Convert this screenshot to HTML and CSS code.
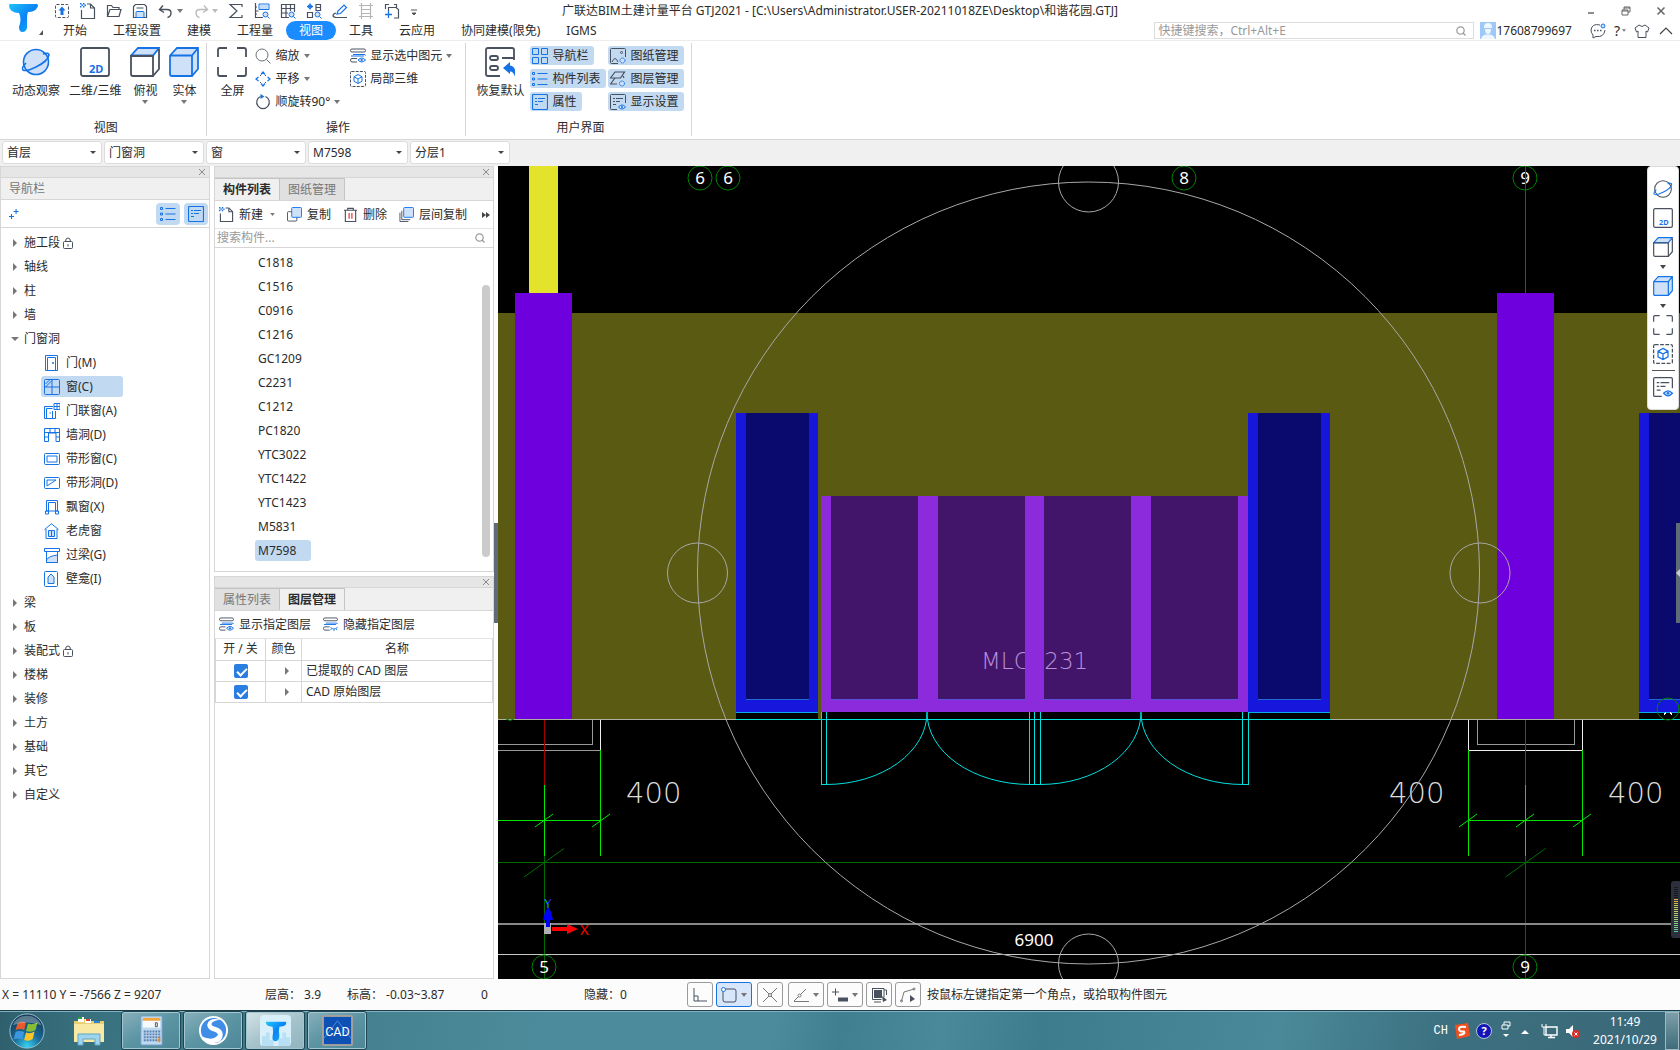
FILE: index.html
```
<!DOCTYPE html>
<html lang="zh-CN">

<head>
    <meta charset="utf-8" />
    <meta name="viewport" content="width=device-width, initial-scale=1">
    <title>广联达BIM土建计量平台 GTJ2021</title>
    <link rel="stylesheet" href="styles.css">
</head>

<body>
    <svg class="sprite" aria-hidden="true">
        <defs>
            <linearGradient id="logo-fill" x1="0" y1="0" x2="1" y2="1">
                <stop offset="0" stop-color="#1fc4fb" />
                <stop offset=".5" stop-color="#0a84f5" />
                <stop offset="1" stop-color="#12b4f8" />
            </linearGradient>
            <radialGradient id="orb-fill" cx=".5" cy=".95" r=".9">
                <stop offset="0" stop-color="#35d3f5" />
                <stop offset=".45" stop-color="#1b6a96" />
                <stop offset="1" stop-color="#123a58" />
            </radialGradient>
        </defs>

        <symbol id="i-caret" viewBox="0 0 6 4"><path d="M0 0h6L3 4z" fill="currentColor" /></symbol>
        <symbol id="i-tri" viewBox="0 0 4 8"><path d="M0 0l4 4-4 4z" fill="#777" /></symbol>
        <symbol id="i-close" viewBox="0 0 8 8"><path d="M1 1l6 6M7 1L1 7" stroke="#8a8a8a" /></symbol>

        <!-- quick access -->
        <symbol id="i-publish" viewBox="0 0 16 16" fill="none"><rect x="1.5" y="1.5" width="13" height="13" rx="1" stroke="#49505e" stroke-dasharray="3 1.5" /><path d="M8 3.500l3.500 4h-2V12h-3V7.500h-2z" fill="#1673e6" /></symbol>
        <symbol id="i-new" viewBox="0 0 16 16" fill="none"><path d="M1.500 7v8.500h13V5l-4-4H7M10.500 1v4h4" stroke="#49505e" stroke-width="1.2" /><path d="M0 0h1.500v1.500H0zM3 0h1.500v1.500H3zM1.500 1.500H3V3H1.500zM0 3h1.500v1.500H0zM3 3h1.500v1.500H3zM4.500 1.500H6V3H4.500z" fill="#1673e6" /></symbol>
        <symbol id="i-open" viewBox="0 0 16 16" fill="none"><path d="M1.500 13.500v-11h4l1.500 2h6v2M1.500 13.500l2.500-7h11l-2 7z" stroke="#49505e" stroke-width="1.2" /></symbol>
        <symbol id="i-save" viewBox="0 0 16 16" fill="none"><path d="M1.500 14.500V3.500l2-2h9l2 2v11z" stroke="#49505e" stroke-width="1.2" /><path d="M4.500 5h7" stroke="#49505e" /><path d="M4 14.500V9.500q0-1 1-1h6q1 0 1 1v5z" fill="#cfe1f8" stroke="#1673e6" /></symbol>
        <symbol id="i-undo" viewBox="0 0 16 16" fill="none"><path d="M5 2.500L1.500 6.500 6 9.500M2 6.500h7q4 0 4 3.500t-3.500 4.500" stroke="currentColor" stroke-width="1.4" /></symbol>
        <symbol id="i-redo" viewBox="0 0 16 16" fill="none"><path d="M11 2.500l3.500 4-4.500 3M14 6.500H7Q3 6.500 3 10t3.500 4.500" stroke="currentColor" stroke-width="1.4" /></symbol>
        <symbol id="i-sigma" viewBox="0 0 16 16" fill="none"><path d="M14 4V1.500H2L9 8l-7 6.500h12V12" stroke="#49505e" stroke-width="1.2" /></symbol>
        <symbol id="i-calc" viewBox="0 0 16 16" fill="none"><path d="M1.500 0v14.500H9M1.500 4H3M1.500 8h3M1.500 11H3" stroke="#49505e" stroke-width="1.2" /><path d="M5 1h10v5.500H5z" stroke="#1673e6" /><path d="M6.500 3h7M6.500 5h7" stroke="#1673e6" stroke-dasharray="1 1" /><circle cx="11.5" cy="11.5" r="2.5" fill="#cfe1f8" stroke="#1673e6" /><path d="M13.500 13.500l2 2" stroke="#1673e6" /></symbol>
        <symbol id="i-table" viewBox="0 0 16 16" fill="none"><path d="M9 14.500H1.500v-13h13V9M1.500 5.500h13M1.500 10H8M6 1.500v13M10.500 1.500V8" stroke="#49505e" stroke-width="1.2" /><circle cx="11.5" cy="11.5" r="2.5" fill="#cfe1f8" stroke="#1673e6" /><path d="M13.500 13.500l2 2" stroke="#1673e6" /></symbol>
        <symbol id="i-parts" viewBox="0 0 16 16" fill="none"><path d="M1.500 9.500h5v5h-5zM10 7.500V1.500h4.500v6zM10 4.500h4.500" stroke="#49505e" stroke-width="1.2" /><path d="M1 3.500h6M4 .5v6" stroke="#1673e6" stroke-width="1.4" /><circle cx="4" cy="3.5" r="1.8" stroke="#1673e6" /><circle cx="11.5" cy="11.5" r="2.5" fill="#cfe1f8" stroke="#1673e6" /><path d="M13.500 13.500l2 2" stroke="#1673e6" /></symbol>
        <symbol id="i-pen" viewBox="0 0 16 16" fill="none"><path d="M5 11l1-3 6-6 2.500 2.500-6 6z" stroke="#1673e6" stroke-width="1.2" /><path d="M4 10q-3 1-3 2.500T4 14.500h11" stroke="#49505e" stroke-width="1.2" /></symbol>
        <symbol id="i-ladder" viewBox="0 0 16 16" fill="none"><path d="M3.500 0v16M12.500 0v16M1 2.500h14M3.500 6.500h9M3.500 10.500h9M1 13.500h14" stroke="#b5b5b5" stroke-width="1.2" /></symbol>
        <symbol id="i-addpage" viewBox="0 0 16 16" fill="none"><path d="M1.500 6V1.500H5M4.500 8V4.500H12l2.500 2V15H10M10 1.500h2.500v3" stroke="#49505e" stroke-width="1.2" /><path d="M1 11.500h7M4.500 8v7" stroke="#1673e6" stroke-width="1.3" /></symbol>

        <!-- large view icons -->
        <symbol id="b-orbit" viewBox="0 0 30 30" fill="none"><circle cx="15" cy="15" r="12.5" fill="var(--orbit-fill)" stroke="var(--orbit-stroke)" stroke-width="1.6" /><path d="M5 16q-5 5-3 7 3 2 13-3 12-6 13-12 0-3-6-1" stroke="#1673e6" stroke-width="1.6" /></symbol>
        <symbol id="b-2d" viewBox="0 0 30 30" fill="none"><rect x="1" y="1" width="28" height="28" rx="2" stroke="#49505e" stroke-width="1.8" /><text x="9" y="26" class="two-d">2D</text></symbol>
        <symbol id="b-top" viewBox="0 0 30 30" fill="none"><path d="M1 8.500L8 1h21l-6 7.500z" fill="#cfe1f8" stroke="#1673e6" stroke-width="1.8" /><path d="M1 9v18q0 2 2 2h20V9zM23 29l6-7V2" stroke="#49505e" stroke-width="1.8" /></symbol>
        <symbol id="b-solid" viewBox="0 0 30 30"><path d="M1 8.500L8 1h21v21l-6 7H3q-2 0-2-2zM1 8.500h22V29M23 8.500L29 1" fill="#cfe1f8" stroke="#1673e6" stroke-width="1.8" /></symbol>
        <symbol id="b-full" viewBox="0 0 30 30" fill="none"><path d="M1 10V3q0-2 2-2h7M20 1h7q2 0 2 2v7M29 20v7q0 2-2 2h-7M10 29H3q-2 0-2-2v-7" stroke="#49505e" stroke-width="1.8" /></symbol>
        <symbol id="b-reset" viewBox="0 0 30 30" fill="none"><path d="M15 29H3q-2 0-2-2V3q0-2 2-2h24q2 0 2 2v10M17 11h12" stroke="#49505e" stroke-width="1.8" /><rect x="5" y="9" width="8" height="4" rx="2" stroke="#49505e" stroke-width="1.8" /><rect x="5" y="19" width="8" height="4" rx="2" stroke="#49505e" stroke-width="1.8" /><path d="M18 21l7-6v3.500q7 1 4.500 11-1-5-4.500-5V27z" fill="#1673e6" /></symbol>

        <!-- small ribbon icons -->
        <symbol id="i-zoom" viewBox="0 0 16 16" fill="none"><circle cx="7" cy="7" r="6" stroke="#6b7079" /><path d="M11.500 11.500l4 4" stroke="#6b7079" /></symbol>
        <symbol id="i-pan" viewBox="0 0 16 16" fill="none"><path d="M6 3.500l2-2.500 2 2.500M6 12.500L8 15l2-2.500M3.500 6L1 8l2.500 2M12.500 6L15 8l-2.500 2" stroke="#1673e6" stroke-width="1.3" /><path d="M5 5l1-1M11 5l-1-1M5 11l1 1M11 11l-1 1" stroke="#49505e" /></symbol>
        <symbol id="i-rotate" viewBox="0 0 16 16" fill="none"><path d="M10.500 2.500a6.300 6.300 0 1 1-5 0" stroke="#49505e" stroke-width="1.2" /><path d="M5.500 0l4 2.500-4 2.500z" fill="#1673e6" /></symbol>
        <symbol id="i-rows" viewBox="0 0 16 16" fill="none"><rect x=".5" y="1" width="15" height="3" rx="1.5" stroke="#49505e" /><path d="M2 10.500h5M2 14h5M2 10.500q-1.500 0-1.500 1.700T2 14" stroke="#49505e" /><path d="M3 6.500h11q1.500 0 1.500 1M1 8h13" stroke="#1673e6" /><path d="M8 12q3.700-4 7.500 0-3.800 4-7.500 0z" fill="#cfe1f8" stroke="#1673e6" /><circle cx="11.7" cy="12" r="1" fill="#1673e6" /></symbol>
        <symbol id="i-rows-hide" viewBox="0 0 16 16" fill="none"><rect x=".5" y="1" width="15" height="3" rx="1.5" stroke="#49505e" /><path d="M2 10.500h5M2 14h5M2 10.500q-1.500 0-1.500 1.700T2 14" stroke="#49505e" /><path d="M3 6.500h11q1.500 0 1.500 1M1 8h13" stroke="#1673e6" /><path d="M8 11q3.500 3.500 7.500 0M9 12.500l-1 1.500M11.700 13v2M14 12.500l1 1.500" stroke="#1673e6" /></symbol>
        <symbol id="i-local" viewBox="0 0 16 16" fill="none"><rect x=".5" y=".5" width="15" height="15" rx="1" stroke="#49505e" stroke-dasharray="3 1.2" /><path d="M8 3.500l4 2.200v4.600l-4 2.200-4-2.200V5.700zM4 5.700L8 8l4-2.300M8 8v4.500" stroke="#1673e6" /></symbol>
        <symbol id="i-four" viewBox="0 0 16 16" fill="none"><path d="M.5.5h6v6h-6zM9.500.5h6v6h-6zM.5 9.500h6v6h-6zM9.500 9.500h6v6h-6z" stroke="#1673e6" /></symbol>
        <symbol id="i-list" viewBox="0 0 16 16" fill="none"><path d="M5.500 2.500h10M5.500 8h10M5.500 13.500h10" stroke="#1673e6" stroke-width="1.2" /><path d="M.5 1.500h2v2h-2zM.5 7h2v2h-2zM.5 12.500h2v2h-2z" stroke="#1673e6" /></symbol>
        <symbol id="i-prop" viewBox="0 0 16 16" fill="none"><rect x=".5" y=".5" width="15" height="15" rx="1" stroke="#1673e6" stroke-width="1.2" /><path d="M3 4.500h2M6 4.500h7M3 7.500h2M6 7.500h5M3 10.500h3" stroke="#1673e6" /></symbol>
        <symbol id="i-drawing" viewBox="0 0 16 16" fill="none"><path d="M8 15.500H1.500q-1 0-1-1v-13q0-1 1-1h13q1 0 1 1V9" stroke="#49505e" /><circle cx="11.5" cy="4.5" r="1" stroke="#49505e" /><path d="M2 14q3-7 6 0" stroke="#49505e" /><circle cx="12.5" cy="12.5" r="2.5" fill="#cfe1f8" stroke="#1673e6" stroke-dasharray="1.5 .5" /></symbol>
        <symbol id="i-layer" viewBox="0 0 16 16" fill="none"><path d="M5 1h9.500l-4 6H.5zM5 7l-4.500 6H7M13 5l1 2" stroke="#49505e" stroke-width="1.2" /><circle cx="12" cy="12.5" r="2.5" fill="#cfe1f8" stroke="#1673e6" stroke-dasharray="1.5 .5" /></symbol>
        <symbol id="i-display" viewBox="0 0 16 16" fill="none"><path d="M7 15.500H1.500q-1 0-1-1v-13q0-1 1-1h13q1 0 1 1V9" stroke="#49505e" /><path d="M3 4.500h2M6 4.500h7M3 7.500h2M6 7.500h4M3 10.500h3" stroke="#49505e" /><path d="M8.500 13q3.500-4 7 0-3.500 4-7 0z" fill="#cfe1f8" stroke="#1673e6" /><circle cx="12" cy="13" r="1" fill="#1673e6" /></symbol>

        <!-- list toolbar -->
        <symbol id="i-copy" viewBox="0 0 16 16"><rect x=".5" y="5" width="10" height="10" rx="1" fill="none" stroke="#49505e" /><rect x="5" y=".5" width="10.5" height="10.5" rx="1" fill="#cfe1f8" stroke="#1673e6" /></symbol>
        <symbol id="i-trash" viewBox="0 0 16 16" fill="none"><path d="M1 3.500h14M2.500 3.500v12h11v-12M5 3.500v-2h6v2" stroke="#49505e" stroke-width="1.2" /><path d="M6.500 6.500v6M9.500 6.500v6" stroke="#e02a2a" stroke-width="1.2" /></symbol>
        <symbol id="i-copyfloor" viewBox="0 0 16 16"><path d="M1 6v9.500h9M3 4v9.500h9" fill="none" stroke="#49505e" /><rect x="5" y=".5" width="10.5" height="10.5" rx="1" fill="#cfe1f8" stroke="#1673e6" /></symbol>
        <symbol id="i-search" viewBox="0 0 10 10" fill="none"><circle cx="4.5" cy="4.5" r="3.7" stroke="#9a9a9a" stroke-width="1.2" /><path d="M7 7l2.500 2.500" stroke="#9a9a9a" stroke-width="1.2" /></symbol>
        <symbol id="i-lock" viewBox="0 0 10 12" fill="none"><rect x=".5" y="4.5" width="9" height="7" rx="1" stroke="#49505e" /><path d="M2.500 4.500Q2.500 1 5 1t2.500 3.500M5 7v2.500" stroke="#49505e" /></symbol>

        <!-- door and window components -->
        <symbol id="c-door" viewBox="0 0 16 16" fill="none"><path d="M1.500.5h12v15h-12zM3.500 15.500v-13h8v13" stroke="#1673e6" /><path d="M8 8h2" stroke="#1673e6" stroke-width="1.5" /></symbol>
        <symbol id="c-window" viewBox="0 0 16 16" fill="none"><rect x=".5" y=".5" width="15" height="15" rx="1" stroke="#1673e6" /><path d="M8 1v14M1 8h14M1.500 5l4-4M1.500 8L8 1.500" stroke="#1673e6" /></symbol>
        <symbol id="c-doorwin" viewBox="0 0 16 16" fill="none"><path d="M9 3.500H.5v12h11V8M2.500 15.500v-10h6M8.500 8v7" stroke="#1673e6" /><path d="M10 .5h6v6h-6zM10 3.500h6M13 .5v6M5.500 10h1.500" stroke="#1673e6" /></symbol>
        <symbol id="c-hole" viewBox="0 0 16 16" fill="none"><path d="M.5 1.500h15v13h-3.500V6H4.500v8.500h-4zM.5 5.500h15M6 1.500v4M11 1.500v4M.5 10h4M12 10h3.500" stroke="#1673e6" /></symbol>
        <symbol id="c-strip" viewBox="0 0 16 16" fill="none"><rect x=".5" y="2.5" width="15" height="11" rx="1" stroke="#1673e6" /><path d="M3 5h10v6H3z" stroke="#1673e6" /></symbol>
        <symbol id="c-striphole" viewBox="0 0 16 16" fill="none"><rect x=".5" y="2.5" width="15" height="11" rx="1" stroke="#1673e6" /><path d="M3 11V5h9z" stroke="#1673e6" /></symbol>
        <symbol id="c-bay" viewBox="0 0 16 16" fill="none"><path d="M2.500 12V1.500h11V12M4.500 12V3.500h7V12M2 12h12M1.500 12h3v3h-3zM11.500 12h3v3h-3z" stroke="#1673e6" /></symbol>
        <symbol id="c-dormer" viewBox="0 0 16 16"><path d="M.5 6.500L7.500.8l7 5.700M2 6v9.500h11V6" fill="none" stroke="#1673e6" /><path d="M4.500 7.500h6v6h-6zM7.500 7.500v6" fill="#cfe1f8" stroke="#1673e6" /></symbol>
        <symbol id="c-lintel" viewBox="0 0 16 16"><path d="M.5 1.500h15v3H.5zM2.500 4.500v11h11v-11" fill="none" stroke="#1673e6" /><path d="M2.500 13q2-4 11-5v7.500h-11z" fill="#cfe1f8" stroke="#1673e6" /></symbol>
        <symbol id="c-niche" viewBox="0 0 16 16"><rect x=".5" y=".5" width="13" height="15" rx="1" fill="none" stroke="#1673e6" /><path d="M4 12.500V6l3-3 3 3v6.500z" fill="#cfe1f8" stroke="#1673e6" /></symbol>
    </svg>

    <header class="titlebar">
        <button class="logo" aria-label="主菜单">
            <svg width="44" height="34" viewBox="0 0 44 34"><path d="M10 4h27q2 1 0 4-2 4-9 4-1 2-1 8v8q-1 4-4.500 4T19 27q3-8 0-14-9 0-10-7 0-2 1-2z" fill="url(#logo-fill)" /><path d="M43 30v5h-4z" fill="#555" /></svg>
        </button>
        <div class="title-row">
            <div class="quick">
                <button aria-label="发布"><svg><use href="#i-publish" /></svg></button>
                <button aria-label="新建"><svg><use href="#i-new" /></svg></button>
                <button aria-label="打开"><svg><use href="#i-open" /></svg></button>
                <button aria-label="保存"><svg><use href="#i-save" /></svg></button>
                <button aria-label="撤销"><svg><use href="#i-undo" /></svg><svg class="caret"><use href="#i-caret" /></svg></button>
                <button class="off" aria-label="恢复"><svg><use href="#i-redo" /></svg><svg class="caret"><use href="#i-caret" /></svg></button>
                <button aria-label="汇总"><svg><use href="#i-sigma" /></svg></button>
                <button aria-label="查看计算式"><svg><use href="#i-calc" /></svg></button>
                <button aria-label="查看工程量"><svg><use href="#i-table" /></svg></button>
                <button aria-label="查找图元"><svg><use href="#i-parts" /></svg></button>
                <button aria-label="画笔"><svg><use href="#i-pen" /></svg></button>
                <button aria-label="钢筋"><svg><use href="#i-ladder" /></svg></button>
                <button aria-label="添加页"><svg><use href="#i-addpage" /></svg></button>
                <button class="customize" aria-label="自定义"><svg viewBox="0 0 16 16"><path d="M5 7h6M6 10h4l-2 2z" fill="#555" stroke="#555" /></svg></button>
            </div>
            <h1>广联达BIM土建计量平台 GTJ2021 - [C:\Users\Administrator.USER-20211018ZE\Desktop\和谐花园.GTJ]</h1>
            <div class="window-buttons">
                <button aria-label="最小化"><svg viewBox="0 0 10 10"><path d="M2 7h6" stroke="#666" stroke-width="1.5" /></svg></button>
                <button aria-label="还原"><svg viewBox="0 0 10 10" fill="none"><path d="M1 4h6v5H1zM3 4V1h6v5H7M1 5h6M3 2h6" stroke="#666" /></svg></button>
                <button aria-label="关闭"><svg viewBox="0 0 10 10"><path d="M1.500 1.500l7 7M8.500 1.500l-7 7" stroke="#666" stroke-width="1.5" /></svg></button>
            </div>
        </div>
        <div class="tab-row">
            <nav class="tabs">
                <a href="#">开始</a>
                <a href="#">工程设置</a>
                <a href="#">建模</a>
                <a href="#">工程量</a>
                <a href="#" class="active">视图</a>
                <a href="#">工具</a>
                <a href="#">云应用</a>
                <a href="#">协同建模(限免)</a>
                <a href="#">IGMS</a>
            </nav>
            <label class="hotkey">
                <input type="search" aria-label="快捷键搜索" placeholder="快捷键搜索，Ctrl+Alt+E">
                <svg><use href="#i-search" /></svg>
            </label>
            <a href="#" class="account">
                <svg width="16" height="17" viewBox="0 0 16 17"><path d="M0 0h16v17H0z" fill="#9ec9f7" /><path d="M4 5q0-4 4-4t4 4v1H4zM5 7h6q0 5-3 5T5 7zM1 17q1-4 5-4.500h4q4 .5 5 4.500z" fill="#eef6ff" /></svg>17608799697
            </a>
            <div class="help-buttons">
                <button aria-label="消息"><svg viewBox="0 0 16 16" fill="none"><path d="M10 2Q2 0 1 7q0 3 2 5v3l3-1.500q8 1 9-6.500" stroke="#49505e" /><path d="M4 7.500h1.500M7 7.500h1.500M10 7.500h1.500" stroke="#49505e" stroke-width="1.5" /><circle cx="13" cy="3" r="2" fill="#cfe1f8" stroke="#1673e6" /></svg></button>
                <button class="help" aria-label="帮助">?<svg class="caret"><use href="#i-caret" /></svg></button>
                <button aria-label="皮肤"><svg viewBox="0 0 16 16" fill="none"><path d="M5 2L1 5l1.500 4L4 8v6.500h8V8l1.500 1L15 5l-4-3q-3 3-6 0z" stroke="#49505e" /></svg></button>
                <button aria-label="收起"><svg viewBox="0 0 16 16" fill="none"><path d="M2 11l6-6 6 6" stroke="#444" stroke-width="1.2" /></svg></button>
            </div>
        </div>
    </header>

    <section class="ribbon">
        <div class="group wide">
            <div class="group-body">
                <button class="big"><svg><use href="#b-orbit" /></svg>动态观察</button>
                <button class="big"><svg><use href="#b-2d" /></svg>二维/三维</button>
                <button class="big"><svg><use href="#b-top" /></svg>俯视<svg class="caret"><use href="#i-caret" /></svg></button>
                <button class="big"><svg><use href="#b-solid" /></svg>实体<svg class="caret"><use href="#i-caret" /></svg></button>
            </div>
            <h2>视图</h2>
        </div>
        <div class="group">
            <div class="group-body">
                <button class="big"><svg><use href="#b-full" /></svg>全屏</button>
                <div class="stack">
                    <button class="small"><svg><use href="#i-zoom" /></svg>缩放<svg class="caret"><use href="#i-caret" /></svg></button>
                    <button class="small"><svg><use href="#i-pan" /></svg>平移<svg class="caret"><use href="#i-caret" /></svg></button>
                    <button class="small"><svg><use href="#i-rotate" /></svg>顺旋转90°<svg class="caret"><use href="#i-caret" /></svg></button>
                </div>
                <div class="stack">
                    <button class="small"><svg><use href="#i-rows" /></svg>显示选中图元<svg class="caret"><use href="#i-caret" /></svg></button>
                    <button class="small"><svg><use href="#i-local" /></svg>局部三维</button>
                </div>
            </div>
            <h2>操作</h2>
        </div>
        <div class="group">
            <div class="group-body">
                <button class="big"><svg><use href="#b-reset" /></svg>恢复默认</button>
                <div class="stack">
                    <button class="small on"><svg><use href="#i-four" /></svg>导航栏</button>
                    <button class="small on"><svg><use href="#i-list" /></svg>构件列表</button>
                    <button class="small on"><svg><use href="#i-prop" /></svg>属性</button>
                </div>
                <div class="stack">
                    <button class="small on"><svg><use href="#i-drawing" /></svg>图纸管理</button>
                    <button class="small on"><svg><use href="#i-layer" /></svg>图层管理</button>
                    <button class="small on"><svg><use href="#i-display" /></svg>显示设置</button>
                </div>
            </div>
            <h2>用户界面</h2>
        </div>
    </section>

    <section class="selectors">
        <div class="select"><select aria-label="楼层"><option>首层</option></select></div>
        <div class="select"><select aria-label="构件分类"><option>门窗洞</option></select></div>
        <div class="select"><select aria-label="构件类型"><option>窗</option></select></div>
        <div class="select"><select aria-label="构件"><option>M7598</option></select></div>
        <div class="select"><select aria-label="分层"><option>分层1</option></select></div>
    </section>

    <main>
        <aside class="panel navigator">
            <div class="grip"><button aria-label="关闭"><svg><use href="#i-close" /></svg></button></div>
            <h2>导航栏</h2>
            <div class="nav-tools">
                <button class="plus" aria-label="展开"><svg viewBox="0 0 12 12"><path d="M8.500 0v6M5.500 3h6M3 6v6M0 9h6" stroke="#1673e6" stroke-width="1.3" /></svg></button>
                <button class="on" aria-label="列表"><svg><use href="#i-list" /></svg></button>
                <button class="on" aria-label="图标"><svg><use href="#i-prop" /></svg></button>
            </div>
            <ul class="tree">
                <li><button><svg class="tri"><use href="#i-tri" /></svg>施工段<svg class="lock"><use href="#i-lock" /></svg></button></li>
                <li><button><svg class="tri"><use href="#i-tri" /></svg>轴线</button></li>
                <li><button><svg class="tri"><use href="#i-tri" /></svg>柱</button></li>
                <li><button><svg class="tri"><use href="#i-tri" /></svg>墙</button></li>
                <li>
                    <button class="open"><svg class="tri"><use href="#i-tri" /></svg>门窗洞</button>
                    <ul>
                        <li><button><svg><use href="#c-door" /></svg>门(M)</button></li>
                        <li><button class="selected"><svg><use href="#c-window" /></svg>窗(C)</button></li>
                        <li><button><svg><use href="#c-doorwin" /></svg>门联窗(A)</button></li>
                        <li><button><svg><use href="#c-hole" /></svg>墙洞(D)</button></li>
                        <li><button><svg><use href="#c-strip" /></svg>带形窗(C)</button></li>
                        <li><button><svg><use href="#c-striphole" /></svg>带形洞(D)</button></li>
                        <li><button><svg><use href="#c-bay" /></svg>飘窗(X)</button></li>
                        <li><button><svg><use href="#c-dormer" /></svg>老虎窗</button></li>
                        <li><button><svg><use href="#c-lintel" /></svg>过梁(G)</button></li>
                        <li><button><svg><use href="#c-niche" /></svg>壁龛(I)</button></li>
                    </ul>
                </li>
                <li><button><svg class="tri"><use href="#i-tri" /></svg>梁</button></li>
                <li><button><svg class="tri"><use href="#i-tri" /></svg>板</button></li>
                <li><button><svg class="tri"><use href="#i-tri" /></svg>装配式<svg class="lock"><use href="#i-lock" /></svg></button></li>
                <li><button><svg class="tri"><use href="#i-tri" /></svg>楼梯</button></li>
                <li><button><svg class="tri"><use href="#i-tri" /></svg>装修</button></li>
                <li><button><svg class="tri"><use href="#i-tri" /></svg>土方</button></li>
                <li><button><svg class="tri"><use href="#i-tri" /></svg>基础</button></li>
                <li><button><svg class="tri"><use href="#i-tri" /></svg>其它</button></li>
                <li><button><svg class="tri"><use href="#i-tri" /></svg>自定义</button></li>
            </ul>
        </aside>

        <div class="side">
            <section class="panel">
                <div class="grip"><button aria-label="关闭"><svg><use href="#i-close" /></svg></button></div>
                <div class="panel-tabs">
                    <button class="active">构件列表</button>
                    <button>图纸管理</button>
                </div>
                <div class="panel-tools">
                    <button><svg><use href="#i-new" /></svg>新建<svg class="caret"><use href="#i-caret" /></svg></button>
                    <button><svg><use href="#i-copy" /></svg>复制</button>
                    <button><svg><use href="#i-trash" /></svg>删除</button>
                    <button><svg><use href="#i-copyfloor" /></svg>层间复制</button>
                    <button class="more" aria-label="更多"><svg viewBox="0 0 8 6"><path d="M0 0l4 3-4 3zM4 0l4 3-4 3z" fill="#444" /></svg></button>
                </div>
                <label class="filter">
                    <input type="search" aria-label="搜索构件" placeholder="搜索构件...">
                    <svg><use href="#i-search" /></svg>
                </label>
                <div class="list-wrap">
                    <ul class="list">
                        <li><button>C1818</button></li>
                        <li><button>C1516</button></li>
                        <li><button>C0916</button></li>
                        <li><button>C1216</button></li>
                        <li><button>GC1209</button></li>
                        <li><button>C2231</button></li>
                        <li><button>C1212</button></li>
                        <li><button>PC1820</button></li>
                        <li><button>YTC3022</button></li>
                        <li><button>YTC1422</button></li>
                        <li><button>YTC1423</button></li>
                        <li><button>M5831</button></li>
                        <li><button class="selected">M7598</button></li>
                    </ul>
                    <div class="thumb"></div>
                </div>
            </section>

            <section class="panel layers">
                <div class="grip"><button aria-label="关闭"><svg><use href="#i-close" /></svg></button></div>
                <div class="panel-tabs">
                    <button>属性列表</button>
                    <button class="active">图层管理</button>
                </div>
                <div class="panel-tools">
                    <button><svg><use href="#i-rows" /></svg>显示指定图层</button>
                    <button><svg><use href="#i-rows-hide" /></svg>隐藏指定图层</button>
                </div>
                <table>
                    <thead>
                        <tr><th class="col-on">开 / 关</th><th class="col-color">颜色</th><th>名称</th></tr>
                    </thead>
                    <tbody>
                        <tr>
                            <td><input type="checkbox" id="layer-1" checked></td>
                            <td class="expand"><svg class="tri"><use href="#i-tri" /></svg></td>
                            <td class="name"><label for="layer-1">已提取的 CAD 图层</label></td>
                        </tr>
                        <tr>
                            <td><input type="checkbox" id="layer-2" checked></td>
                            <td class="expand"><svg class="tri"><use href="#i-tri" /></svg></td>
                            <td class="name"><label for="layer-2">CAD 原始图层</label></td>
                        </tr>
                    </tbody>
                </table>
            </section>
        </div>

        <button class="splitter" aria-label="收起面板"><span></span></button>

        <div class="viewport">
            <!-- drawing units are window pixels -->
            <svg class="model" viewBox="498 166 1182 813" preserveAspectRatio="xMidYMid slice" shape-rendering="crispEdges">
                <rect x="498" y="166" width="1182" height="813" fill="#000" />
                <rect x="498" y="313" width="1182" height="407" fill="#5a5a12" />
                <rect x="529" y="166" width="29" height="127" fill="#e3e32b" />
                <rect x="515" y="293" width="57" height="427" fill="#6f00de" />
                <rect x="1497" y="293" width="57" height="427" fill="#6f00de" />

                <!-- windows either side of the door -->
                <g id="side-window">
                    <rect x="736" y="413" width="82" height="307" fill="#000" />
                    <rect x="736" y="413" width="82" height="299" fill="#1616dd" />
                    <rect x="746" y="413" width="63" height="286" fill="#0a0a6e" />
                    <path d="M736 712.500h82" stroke="#0aa8f0" />
                    <path d="M746 699.500h63" stroke="#1e6ad0" />
                </g>
                <use href="#side-window" x="512" />
                <use href="#side-window" x="903" />

                <!-- door -->
                <rect x="821" y="712" width="427" height="8" fill="#000" />
                <rect x="821" y="496" width="427" height="216" fill="#42146a" />
                <text x="981" y="669" class="cad-label">MLC5231</text>
                <path d="M821 496h10v203h87V496h20v203h87V496h19v203h87V496h20v203h87V496h10v216H821z" fill="#8b2bdc" />
                <path d="M831 699.500h87M938 699.500h87M1044 699.500h87M1151 699.500h87" stroke="#5b50d8" />
                <path d="M498 719.500h238M1331 719.500h308" stroke="#b0b0a0" />
                <g fill="none" stroke="#00dede">
                    <path d="M736 719.500h595M1639 719.500h41M821.500 712v72.500h5V712M1029.500 712v72M1034.500 712v72M1040.500 712v72M1029 784.500h12M1242.500 712v72.500h6V712" />
                    <path shape-rendering="auto" d="M826 784.500A101 72 0 0 0 927 712A103 72 0 0 0 1030 784.500M1040 784.500A101 72 0 0 0 1141 712A102 72 0 0 0 1243 784.500" />
                </g>

                <!-- footings, axes and dimensions -->
                <g fill="none">
                    <path d="M498 744.500h94V720M498 750.500h103M1477.500 720v24.500h97V720" stroke="#999" />
                    <path d="M600.500 720v30M1468.500 720v30.500h114V720" stroke="#eee" />
                    <path d="M498 862.500h1182M544.500 856v123M1525.500 856v123" stroke="#006c00" />
                    <path shape-rendering="auto" d="M524 877l40-28.500M1505.500 877l40-28.500" stroke="#006c00" />
                    <path d="M544.500 785v71M600.500 750v106M498 820.500h103M1468.500 750v106M1525.500 785v71M1582.500 750v106M1468 820.500h115" stroke="#00e800" />
                    <path shape-rendering="auto" d="M535 827l18-13M592 827l18-13M1459 827l18-13M1516 827l18-13M1573 827l18-13" stroke="#00e800" />
                    <path d="M544.500 720v65" stroke="#a00000" />
                    <path d="M1525.500 720v65" stroke="#f00000" />
                    <path d="M498 924h1182" stroke="#888" stroke-width="2" />
                    <path d="M498 954.500h1182" stroke="#c8c8c8" />
                </g>

                <g class="axis-rings" shape-rendering="auto">
                    <circle cx="700" cy="178" r="12" />
                    <circle cx="728" cy="178" r="12" />
                    <circle cx="1184" cy="178" r="12" />
                    <circle cx="1525" cy="178" r="12" />
                    <circle cx="544" cy="967" r="12" />
                    <circle cx="1525" cy="967" r="12" />
                    <circle cx="1668" cy="709" r="11" />
                    <path d="M506 719q4 3 8 0" />
                </g>
                <g class="axis-numbers">
                    <text x="700" y="184">6</text>
                    <text x="728" y="184">6</text>
                    <text x="1184" y="184">8</text>
                    <text x="1525" y="184">9</text>
                    <text x="544" y="973">5</text>
                    <text x="1525" y="973">9</text>
                    <text x="1034" y="946">6900</text>
                </g>
                <path d="M1525.500 166v127" stroke="#f00000" />
                <path d="M1664 715l2-3M1670 712l2 3" stroke="#fff" />
                <g class="cad-dims">
                    <text x="626" y="803">400</text>
                    <text x="1389" y="803">400</text>
                    <text x="1608" y="803">400</text>
                </g>

                <!-- orbit control -->
                <g fill="none" stroke="#a8a8a8" shape-rendering="auto">
                    <circle cx="1088.5" cy="573" r="391" />
                    <circle cx="1088.5" cy="182" r="30" />
                    <circle cx="1088.5" cy="964" r="30" />
                    <circle cx="697.5" cy="573" r="30" />
                    <circle cx="1480" cy="573" r="30" />
                </g>

                <g shape-rendering="auto">
                    <path d="M544 923h7v11h-7z" fill="#b0b0b0" />
                    <path d="M552 927h15v-3l11 5-11 5v-3h-15z" fill="#f00" />
                    <path d="M546 927v-7h-3l2-8 3-5 3 5 2 8h-3v7z" fill="#00f" />
                    <text x="580" y="935" class="axis-x">X</text>
                    <text x="544" y="908" class="axis-y">Y</text>
                    <path d="M545 899l3 5v4" stroke="#0c0" fill="none" />
                </g>
            </svg>

            <div class="view-tools">
                <button class="plain-orbit" aria-label="动态观察"><svg><use href="#b-orbit" /></svg></button>
                <button aria-label="二维"><svg><use href="#b-2d" /></svg></button>
                <button class="drop" aria-label="俯视"><svg><use href="#b-top" /></svg><svg class="caret"><use href="#i-caret" /></svg></button>
                <button class="drop" aria-label="实体"><svg><use href="#b-solid" /></svg><svg class="caret"><use href="#i-caret" /></svg></button>
                <button aria-label="全屏"><svg><use href="#b-full" /></svg></button>
                <button aria-label="局部三维"><svg><use href="#i-local" /></svg></button>
                <hr>
                <button aria-label="显示设置"><svg><use href="#i-display" /></svg></button>
            </div>
            <button class="edge-handle" aria-label="展开面板"><svg viewBox="0 0 4 8"><path d="M4 0L0 4l4 4z" fill="#c8ccd0" /></svg></button>
            <div class="meter"></div>
        </div>
    </main>

    <section class="status">
        <span class="coords">X = 11110 Y = -7566 Z = 9207</span>
        <span class="floor">层高： 3.9</span>
        <span class="level">标高： -0.03~3.87</span>
        <span class="count">0</span>
        <span class="hidden-count">隐藏：0</span>
        <div class="snap">
            <button aria-label="正交"><svg viewBox="0 0 16 16" fill="none"><path d="M2 1v13h13M2 9h4v5" stroke="#49505e" /></svg></button>
            <button class="on" aria-label="捕捉"><svg viewBox="0 0 16 16" fill="none"><rect x="2" y="2" width="13" height="13" rx="2" stroke="#49505e" /><circle cx="2.5" cy="2.5" r="2" fill="#fff" stroke="#1673e6" /></svg><svg class="caret"><use href="#i-caret" /></svg></button>
            <button class="first" aria-label="交点"><svg viewBox="0 0 16 16" fill="none"><path d="M1 1l14 14M15 1L1 15" stroke="#777" /><circle cx="8" cy="8" r="1.5" stroke="#777" fill="#fff" /></svg></button>
            <button class="first" aria-label="角度"><svg viewBox="0 0 16 16" fill="none"><path d="M1 14L13 2M1 14.500h15" stroke="#777" /><circle cx="6.5" cy="8.5" r="1.5" stroke="#777" fill="#fff" /></svg><svg class="caret"><use href="#i-caret" /></svg></button>
            <button aria-label="偏移"><svg viewBox="0 0 16 16" fill="none"><path d="M0 5h7M3.500 1.500v7" stroke="#49505e" /><path d="M6 10.500h10v4H6z" fill="#49505e" /></svg><svg class="caret"><use href="#i-caret" /></svg></button>
            <button aria-label="选择"><svg viewBox="0 0 16 16" fill="none"><path d="M3 3h8v8H3z" fill="#49505e" /><path d="M1 1.500h12v9M1.500 1v11.500h9M13 3h2.500v5M3 15h7" stroke="#49505e" /><path d="M11 9l5 4-4 2z" fill="#49505e" /></svg></button>
            <button aria-label="折线"><svg viewBox="0 0 16 16" fill="none"><path d="M1.500 14L4 5l10-3" stroke="#777" /><circle cx="1.5" cy="14" r="1" stroke="#777" /><circle cx="14" cy="2" r="1" stroke="#777" /><path d="M10 8l5 4-5 3z" fill="#49505e" /></svg></button>
        </div>
        <span>按鼠标左键指定第一个角点，或拾取构件图元</span>
    </section>

    <footer class="taskbar">
        <button class="start" aria-label="开始"><svg viewBox="0 0 40 40"><circle cx="20" cy="20" r="18" fill="url(#orb-fill)" stroke="#9fc3d2" /><path d="M10 12q5-3 9-1l-2 8q-4-2-9 0z" fill="#e8592b" /><path d="M21 12q4 2 10-1l-2 8q-5 3-10 1z" fill="#86bd33" /><path d="M8 21q4-2 9 0l-2 8q-4-2-9 0z" fill="#3b97e0" /><path d="M19 21.500q4 2 9-1l-2 8q-4 3-9 1z" fill="#f8c52c" /><path d="M5 14Q9 4 20 4t15 10q-15-6-30 0z" fill="#fff" opacity=".3" /></svg></button>
        <button class="pin" aria-label="资源管理器"><svg viewBox="0 0 34 34"><path d="M2 7h5l1-2h5l1 2h18v20H2z" fill="#e8cf72" /><path d="M6 3h6v5H6zM13 5h6v4h-6z" fill="#fff" /><path d="M6 3h4v2H6z" fill="#2ba13a" /><path d="M14 5h4v2h-4z" fill="#d8432e" /><path d="M22 7h6v2h-6z" fill="#2b86d8" /><path d="M2 10h30v18H2z" fill="#f8e9a4" /><path d="M6 31V20h22v11h-5v-6H11v6z" fill="#9fd4ee" stroke="#5fa6c8" /></svg></button>
        <button class="task" aria-label="计算器"><svg viewBox="0 0 32 32"><rect x="5" y="1" width="22" height="30" rx="1" fill="#bdd8ef" stroke="#6d9cc4" /><path d="M7 3h18v3H7z" fill="#f2a63a" /><path d="M7 6h18v7H7z" fill="#f6fafc" /><path d="M20 8h2v4h-2z" fill="none" stroke="#555" /><path d="M8 17h17M8 20h17M8 23h17M8 26h17" stroke="#5b7fae" stroke-width="2" stroke-dasharray="2 1" /><path d="M23 23h2v5h-2z" fill="#f08a1c" /></svg></button>
        <button class="task" aria-label="浏览器"><svg viewBox="0 0 32 32"><circle cx="16" cy="16" r="15" fill="#fff" /><circle cx="16" cy="16" r="13" fill="#3f8de6" /><path d="M25 5Q11 2 9.500 10q0 5 7 7 6 2 3 5-5 5-16 0 5 8 13 7 9-1 9-9 0-6-8-8-5-1-3-4 3-3 10-3z" fill="#fff" /></svg></button>
        <button class="task current" aria-label="GTJ2021"><svg viewBox="0 0 32 32"><rect width="32" height="32" rx="4" fill="#d9f0fb" /><path d="M2 32V22h4v-4h4v8h4v6zM19 32V24h4v-6h4v5h4v9z" fill="#b8e0f5" /><path d="M6 7h21q1 5-7 5-1 4 0 9 0 6-4 6t-3-5q1-5 0-10-7 0-7-5z" fill="url(#logo-fill)" /></svg></button>
        <button class="task" aria-label="CAD"><svg viewBox="0 0 32 32"><rect width="32" height="32" rx="2" fill="#a4a09c" /><rect x="2" y="2" width="28" height="28" fill="#0d51b5" /><path d="M2 24L16 6l14 18" fill="none" stroke="#4c8ce0" /><text x="16" y="22" class="cad-icon">CAD</text></svg></button>
        <div class="tray">
            <span class="ime">CH</span>
            <svg viewBox="0 0 16 16"><path d="M1 2l13-2 2 13-13 3z" fill="#f2501f" /><path d="M12 4Q5 3 5 6t5 2.500Q12 11 5 12" fill="none" stroke="#fff" stroke-width="2" /></svg>
            <svg viewBox="0 0 16 16"><circle cx="8" cy="8" r="7.5" fill="#1216b8" stroke="#b8c8d8" /><text x="8" y="12" class="tray-help">?</text></svg>
            <svg viewBox="0 0 16 22" class="tall" fill="none"><path d="M4 5h6v4H4zM6 5V2h6v4h-2" stroke="#fff" /><path d="M5 14h6l-3 3z" fill="#fff" /></svg>
            <svg viewBox="0 0 16 16" class="show-hidden"><path d="M4 11h8L8 7z" fill="#fff" /></svg>
            <svg viewBox="0 0 16 16" class="net" fill="none"><path d="M4 4h11v8H4zM9 12v2M6 14.500h7" stroke="#fff" stroke-width="1.4" /><path d="M0 1v3h4V1M2 4v8h2" stroke="#fff" /></svg>
            <svg viewBox="0 0 16 16"><path d="M1 6h3l4-4v12l-4-4H1z" fill="#fff" /><circle cx="11" cy="11" r="4" fill="#dd2b26" /><path d="M9.500 9.500l3 3M12.500 9.500l-3 3" stroke="#fff" /></svg>
            <time datetime="2021-10-29T11:49">11:49<br>2021/10/29</time>
            <button class="desktop" aria-label="显示桌面"></button>
        </div>
    </footer>
</body>

</html>
```
FILE: styles.css
```
:root {
    --text: #2b2b2b;
    --icon: #49505e;
    --blue: #1673e6;
    --on: #c2d9f2;
    --line: #d6d6d6;
    --grey: #f0f0f0;
    --orbit-fill: #cfe1f8;
    --orbit-stroke: #1673e6;
}

* {
    box-sizing: border-box;
}

body {
    margin: 0;
    height: 100vh;
    display: flex;
    flex-direction: column;
    overflow: hidden;
    background: #fff;
    color: var(--text);
    font: 12px/16px "Noto Sans", "Noto Sans CJK SC", sans-serif;
}

button,
input,
select {
    font: inherit;
    color: inherit;
    margin: 0;
    padding: 0;
    border: 0;
    background: none;
}

button,
a {
    display: flex;
    align-items: center;
    white-space: nowrap;
}

a {
    color: inherit;
    text-decoration: none;
}

svg {
    width: 16px;
    height: 16px;
    flex: none;
    overflow: visible;
}

svg.caret {
    width: 6px;
    height: 4px;
    color: #777;
}

svg.tri {
    width: 4px;
    height: 8px;
}

h1,
h2 {
    margin: 0;
    font-size: 12px;
    font-weight: normal;
}

ul {
    list-style: none;
    margin: 0;
    padding: 0;
}

input::placeholder {
    color: #999;
}

.sprite {
    position: absolute;
    width: 0;
    height: 0;
}

.two-d {
    font: bold 11px "Noto Sans", sans-serif;
    fill: var(--blue);
}

/* title bar */

.titlebar {
    position: relative;
    border-bottom: 1px solid #ececec;
}

.logo {
    position: absolute;
    left: 0;
    top: 0;
}

.logo svg {
    width: 44px;
    height: 34px;
}

.title-row {
    display: grid;
    grid-template-columns: 1fr auto 1fr;
    align-items: center;
    height: 21px;
}

.quick {
    display: flex;
    gap: 10px;
    padding-left: 54px;
    color: var(--icon);
}

.quick button {
    gap: 3px;
}

.quick .off,
.off .caret {
    color: #bbb;
}

.quick .customize {
    margin-left: -4px;
}

.window-buttons {
    display: flex;
    justify-content: flex-end;
    gap: 25px;
    padding-right: 14px;
}

.window-buttons svg {
    width: 10px;
    height: 10px;
}

.tab-row {
    display: flex;
    align-items: center;
    height: 19px;
    padding: 0 6px 0 50px;
}

.tabs {
    display: flex;
    flex: 1;
}

.tabs a {
    height: 19px;
    padding: 0 13px;
}

.tabs .active {
    background: #1a8cff;
    color: #fff;
    border-radius: 10px;
}

.hotkey {
    display: flex;
    align-items: center;
    width: 320px;
    height: 17px;
    border: 1px solid #dcdcdc;
    padding: 0 7px 0 3px;
}

.hotkey input,
.filter input {
    flex: 1;
    min-width: 0;
    outline: none;
}

.hotkey svg,
.filter svg {
    width: 10px;
    height: 10px;
}

.account {
    margin-left: 6px;
}

.account svg {
    height: 17px;
}

.help-buttons {
    display: flex;
    gap: 8px;
    margin-left: 18px;
}

.help-buttons button {
    height: 18px;
}

.help {
    font-size: 14px;
    gap: 2px;
}

.help .caret {
    width: 4px;
    height: 3px;
}

/* ribbon */

.ribbon {
    display: flex;
    height: 98px;
    padding: 2px 0 3px;
}

.group {
    display: flex;
    flex-direction: column;
    justify-content: space-between;
    padding: 3px 7px 0 10px;
    border-right: 1px solid var(--line);
}

.group.wide {
    padding: 3px 7px 0 12px;
}

.group h2 {
    text-align: center;
}

.group-body {
    display: flex;
    gap: 6px;
}

.wide .group-body {
    gap: 9px;
}

.big {
    flex-direction: column;
    align-items: center;
    padding-top: 1px;
}

.big > svg:first-child {
    width: 30px;
    height: 30px;
    margin-bottom: 6px;
}

.big .caret {
    margin-top: 1px;
}

.stack {
    display: flex;
    flex-direction: column;
    align-items: flex-start;
    gap: 4px;
}

.stack + .stack {
    margin-left: -4px;
}

.small {
    height: 19px;
    gap: 4px;
    padding: 0 6px 0 2px;
    border-radius: 3px;
}

.on {
    background: var(--on);
}

/* selectors */

.selectors {
    display: flex;
    gap: 2px;
    height: 27px;
    padding: 1px 2px 0;
    background: var(--grey);
    border-top: 1px solid var(--line);
}

.select {
    position: relative;
    width: 100px;
    height: 23px;
}

.select::after {
    content: "";
    position: absolute;
    right: 6px;
    top: 10px;
    border: 3px solid transparent;
    border-top-color: #444;
    border-bottom: 0;
    pointer-events: none;
}

.select select {
    appearance: none;
    width: 100%;
    height: 100%;
    padding: 0 4px;
    background: #fff;
    border: 1px solid #dcdcdc;
    border-radius: 3px;
}

/* panels */

main {
    flex: 1;
    display: flex;
    min-height: 0;
}

.panel {
    border: 1px solid var(--line);
}

.grip {
    display: flex;
    justify-content: flex-end;
    height: 11px;
    padding-right: 3px;
    background: #e6e6e6;
    border-bottom: 1px solid var(--line);
}

.grip svg {
    width: 8px;
    height: 8px;
}

.navigator {
    width: 210px;
    margin-right: 4px;
}

.navigator h2 {
    height: 22px;
    padding: 3px 8px;
    color: #777;
    background: var(--grey);
    border-bottom: 1px solid var(--line);
}

.nav-tools {
    display: flex;
    align-items: center;
    gap: 4px;
    height: 28px;
    padding: 0 1px 0 8px;
    border-bottom: 1px solid var(--line);
}

.nav-tools .on {
    justify-content: center;
    width: 24px;
    height: 22px;
    border-radius: 4px;
}

.plus {
    margin-right: auto;
}

.plus svg {
    width: 10px;
    height: 10px;
}

.tree {
    padding-top: 4px;
}

.tree li > button,
.list button {
    height: 21px;
    margin-bottom: 3px;
}

.tree li > button {
    padding-left: 12px;
}

.tree .tri {
    margin-right: 7px;
}

.tree .open .tri {
    transform: rotate(90deg);
}

.tree .lock {
    width: 10px;
    height: 12px;
    margin-left: 3px;
}

.tree ul button {
    gap: 6px;
    min-width: 82px;
    margin-left: 40px;
    border-radius: 3px;
}

.tree ul li > button {
    padding-left: 3px;
}

.selected {
    background: var(--on);
}

.side {
    display: flex;
    flex-direction: column;
    gap: 4px;
    width: 280px;
}

.layers {
    flex: 1;
}

.panel-tabs {
    display: flex;
    height: 23px;
    background: var(--grey);
    border-bottom: 1px solid var(--line);
}

.panel-tabs button {
    padding: 0 8px;
    color: #777;
    background: #e0e0e0;
    border-right: 1px solid #c4c4c4;
    border-top: 1px solid #c4c4c4;
}

.panel-tabs .active {
    color: var(--text);
    font-weight: bold;
    background: var(--grey);
}

.panel-tools {
    display: flex;
    align-items: center;
    gap: 12px;
    height: 28px;
    padding: 0 2px 0 4px;
    border-bottom: 1px solid #e4e4e4;
}

.panel-tools button {
    gap: 5px;
}

.panel-tools svg {
    width: 15px;
    height: 15px;
}

.panel-tools .caret {
    width: 5px;
    height: 3px;
    margin-left: 2px;
}

.panel-tools .more {
    justify-content: center;
    width: 10px;
    height: 18px;
    margin-left: auto;
}

.more svg {
    width: 8px;
    height: 6px;
}

.filter {
    display: flex;
    align-items: center;
    height: 19px;
    padding: 0 8px 0 2px;
    border-bottom: 1px solid var(--line);
}

.list-wrap {
    display: flex;
    padding: 4px 3px 7px 0;
}

.list {
    flex: 1;
    padding-left: 40px;
}

.list button {
    padding: 0 15px 0 3px;
    border-radius: 3px;
}

.thumb {
    width: 8px;
    margin: 33px 0 7px;
    border-radius: 4px;
    background: #cbcbcb;
}

table {
    width: 100%;
    border-collapse: collapse;
    table-layout: fixed;
}

th,
td {
    height: 21px;
    padding: 0;
    font-weight: normal;
    text-align: center;
    border: 1px solid var(--line);
}

th {
    border-top: 0;
}

.col-on {
    width: 50px;
}

.col-color {
    width: 36px;
}

td svg,
td input {
    vertical-align: middle;
}

td.expand {
    padding-left: 6px;
}

td.name {
    text-align: left;
    padding-left: 4px;
}

input[type="checkbox"] {
    appearance: none;
    position: relative;
    width: 14px;
    height: 14px;
    border-radius: 2px;
    background: #2a7de1;
}

input[type="checkbox"]:checked::after {
    content: "";
    position: absolute;
    left: 5px;
    top: 2px;
    width: 4px;
    height: 8px;
    border: solid #fff;
    border-width: 0 2px 2px 0;
    transform: rotate(45deg);
}

.splitter {
    width: 4px;
}

.splitter span {
    width: 4px;
    height: 100px;
    background: #5f6b76;
}

/* model view */

.viewport {
    position: relative;
    flex: 1;
    min-width: 0;
    background: #000;
}

.model {
    display: block;
    width: 100%;
    height: 100%;
    overflow: hidden;
}

.axis-rings {
    fill: none;
    stroke: #008200;
}

.axis-numbers {
    font-size: 17px;
    text-anchor: middle;
    fill: #fff;
}

.cad-label {
    font: 200 23px "DejaVu Sans Light", "DejaVu Sans", sans-serif;
    fill: #b890dc;
}

.cad-dims {
    font: 200 29px "DejaVu Sans Light", "DejaVu Sans", sans-serif;
    fill: #ddd;
}

.axis-x {
    font-size: 15px;
    fill: #f00;
}

.axis-y {
    font-size: 13px;
    fill: #22f;
}

.view-tools {
    position: absolute;
    top: 0;
    right: 1px;
    display: flex;
    flex-direction: column;
    align-items: center;
    gap: 9px;
    width: 32px;
    padding: 12px 0;
    background: #fff;
    border: 1px solid #dcdcdc;
    border-radius: 4px;
}

.view-tools button {
    flex-direction: column;
    gap: 8px;
}

.view-tools .drop {
    margin-bottom: -2px;
}

.view-tools svg {
    width: 20px;
    height: 20px;
}

.view-tools .caret {
    width: 6px;
    height: 4px;
    color: #444;
}

.view-tools hr {
    width: 23px;
    margin: -3px 0;
    border: 0;
    border-top: 1px solid #555;
}

.plain-orbit {
    --orbit-fill: none;
    --orbit-stroke: #49505e;
}

.edge-handle {
    position: absolute;
    right: 0;
    top: 357px;
    width: 4px;
    height: 100px;
    background: #5f6b76;
}

.edge-handle svg {
    width: 4px;
    height: 8px;
}

.meter {
    position: absolute;
    right: 0;
    bottom: 41px;
    width: 9px;
    height: 57px;
    border: solid #2c303c;
    border-width: 6px 2px 6px 3px;
    border-radius: 3px 0 0 3px;
    background:
        repeating-linear-gradient(transparent 0 1px, #2c303c 1px 2px),
        linear-gradient(#16181f 0 12px, #e0b040 12px, #c8d060 24px, #60c8a0);
}

/* status bar */

.status {
    display: flex;
    align-items: center;
    height: 31px;
    padding: 0 2px;
    background: #fcfcfc;
    white-space: nowrap;
}

.coords {
    width: 263px;
}

.floor {
    width: 82px;
}

.level {
    width: 134px;
}

.count {
    width: 103px;
}

.hidden-count {
    width: 103px;
}

.snap {
    display: flex;
    gap: 3px;
    margin-right: 6px;
}

.snap button {
    gap: 4px;
    height: 25px;
    padding: 0 4px;
    border: 1px solid #9a9a9a;
    border-radius: 3px;
}

.snap .first {
    margin-left: 2px;
}

.snap .on {
    background: #d7e6fa;
    border-color: #1673e6;
}

/* taskbar */

.taskbar {
    display: flex;
    align-items: center;
    height: 40px;
    border-top: 1px solid #1d3c48;
    box-shadow: inset 0 1px #7fb0bf;
    background: linear-gradient(100deg, #2f5f6c, #38707e 5%, #4c8b9b 32%, #4c8b9b 46%, #3f7f90 50%, #4a8999 56%, #3d7c8d 62%, #4a8999 76%, #3c7080 86%, #3a6878);
}

.start {
    margin-left: 7px;
}

.start svg {
    width: 40px;
    height: 38px;
}

.pin {
    margin: 0 15px 0 25px;
}

.pin svg {
    width: 34px;
    height: 34px;
}

.task {
    justify-content: center;
    width: 60px;
    height: 39px;
    margin-right: 2px;
    border: 1px solid #1d4552;
    border-radius: 3px;
    box-shadow: inset 0 0 0 1px #a4c6d0;
    background: linear-gradient(150deg, #88b0bb, #5b94a3 50%, #4d8797);
}

.task svg {
    width: 31px;
    height: 31px;
}

.task.current {
    background: linear-gradient(150deg, #d5e4e8, #a6c3cb 50%, #8fb4be);
}

.cad-icon {
    font: 13px "Roboto", sans-serif;
    text-anchor: middle;
    fill: #fff;
}

.tray {
    display: flex;
    align-items: center;
    gap: 6px;
    height: 100%;
    margin-left: auto;
    color: #fff;
}

.tray .tall {
    height: 22px;
}

.tray .show-hidden {
    margin-left: -3px;
}

.tray .net {
    margin: 0 1px 0 3px;
}

.tray-help {
    font: bold 11px "Noto Sans", sans-serif;
    text-anchor: middle;
    fill: #fff;
}

.ime {
    font-family: "Liberation Mono", monospace;
}

time {
    width: 68px;
    margin-left: 4px;
    text-align: center;
    line-height: 18px;
}

.desktop {
    width: 14px;
    height: 38px;
    margin-right: 1px;
    border: 1px solid #9fb9c2;
    background: linear-gradient(#7d9ea9, #3f6b7a);
}
```
